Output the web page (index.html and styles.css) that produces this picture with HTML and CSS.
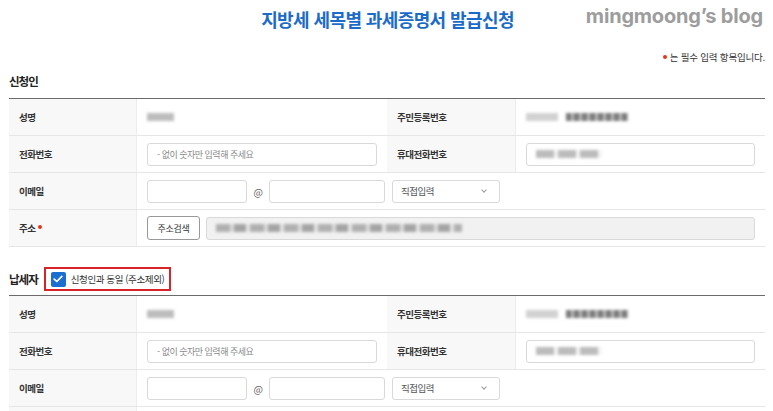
FILE: index.html
```html
<!DOCTYPE html>
<html lang="ko">
<head>
    <meta charset="utf-8">
    <title>지방세 세목별 과세증명서 발급신청</title>
    <link rel="stylesheet" href="styles.css">
</head>
<body>
<div class="page">
    <div class="page-head">
        <h1 class="page-title">지방세 세목별 과세증명서 발급신청</h1>
        <span class="blog-mark">mingmoong’s blog</span>
    </div>
    <p class="required-note"><span class="req-dot"></span>는 필수 입력 항목입니다.</p>

    <!-- 신청인 -->
    <h2 class="section-title">신청인</h2>
    <div class="form-table">
        <div class="th">성명</div>
        <div class="td"><span class="blur blur-name"></span></div>
        <div class="th">주민등록번호</div>
        <div class="td"><span class="blur blur-id-a"></span><span class="blur blur-id-b"></span></div>

        <div class="th">전화번호</div>
        <div class="td"><input class="input input-full" type="text" placeholder="- 없이 숫자만 입력해 주세요"></div>
        <div class="th">휴대전화번호</div>
        <div class="td"><div class="input input-full input-fake"><span class="blur blur-phone"></span></div></div>

        <div class="th">이메일</div>
        <div class="td td-wide">
            <input class="input input-mail-id" type="text">
            <span class="at">@</span>
            <input class="input input-mail-domain" type="text">
            <div class="select">직접입력<span class="caret"></span></div>
        </div>

        <div class="th">주소<span class="req-dot"></span></div>
        <div class="td td-wide">
            <button class="btn" type="button">주소검색</button>
            <div class="input input-addr"><span class="blur blur-addr"></span></div>
        </div>
    </div>

    <!-- 납세자 -->
    <div class="section-head">
        <h2 class="section-title inline">납세자</h2>
        <label class="same-check">
            <span class="check-box"><svg width="10" height="8" viewBox="0 0 10 8"><path d="M1.2 4.1 3.8 6.5 8.8 1.4" fill="none" stroke="#fff" stroke-width="1.7" stroke-linecap="round" stroke-linejoin="round"/></svg></span>
            신청인과 동일 (주소제외)
        </label>
    </div>
    <div class="form-table">
        <div class="th">성명</div>
        <div class="td"><span class="blur blur-name"></span></div>
        <div class="th">주민등록번호</div>
        <div class="td"><span class="blur blur-id-a"></span><span class="blur blur-id-b"></span></div>

        <div class="th">전화번호</div>
        <div class="td"><input class="input input-full" type="text" placeholder="- 없이 숫자만 입력해 주세요"></div>
        <div class="th">휴대전화번호</div>
        <div class="td"><div class="input input-full input-fake"><span class="blur blur-phone"></span></div></div>

        <div class="th">이메일</div>
        <div class="td td-wide">
            <input class="input input-mail-id" type="text">
            <span class="at">@</span>
            <input class="input input-mail-domain" type="text">
            <div class="select">직접입력<span class="caret"></span></div>
        </div>

        <div class="th"></div>
        <div class="td td-wide"></div>
    </div>
</div>
</body>
</html>
```

FILE: styles.css
```css
* {
    margin: 0;
    padding: 0;
    box-sizing: border-box;
}

body {
    background: #fff;
    color: #333;
    font-family: "Noto Sans CJK KR", "Noto Sans", sans-serif;
    overflow: hidden;
}

.page {
    width: 773px;
    height: 411px;
    overflow: hidden;
    padding: 0 8px 0 9px;
}

.page-head {
    position: relative;
    height: 38px;
    display: flex;
    justify-content: center;
    align-items: center;
}

.page-title {
    font-size: 18px;
    font-weight: 700;
    color: #1b6bc9;
    letter-spacing: -0.6px;
    margin-left: 1px;
}

.blog-mark {
    position: absolute;
    right: 2px;
    top: 4px;
    font-family: Inter, sans-serif;
    font-size: 20px;
    font-weight: 700;
    color: #9d9d9d;
    letter-spacing: -0.2px;
}

.required-note {
    text-align: right;
    font-size: 9.5px;
    letter-spacing: -0.2px;
    color: #333;
    line-height: 14px;
    margin-top: 12px;
}

.req-dot {
    display: inline-block;
    width: 4px;
    height: 4px;
    border-radius: 50%;
    background: #e0381a;
    margin: 0 3px 2px 3px;
    vertical-align: middle;
}

.required-note .req-dot {
    margin-left: 0;
}

.section-title {
    font-size: 11.5px;
    font-weight: 700;
    letter-spacing: -1px;
    color: #222;
    line-height: 18px;
    margin: 8px 0 8px;
}

.section-title.inline {
    margin: 0;
}

.form-table {
    display: grid;
    grid-template-columns: 128px 250px 129px 249px;
    grid-auto-rows: 37px;
    border-top: 1px solid #6b6b6b;
}

.th,
.td {
    display: flex;
    align-items: center;
    border-bottom: 1px solid #e6e6e6;
    font-size: 9.5px;
    letter-spacing: -0.5px;
}

.th {
    background: #f8f8f8;
    font-weight: 700;
    color: #333;
    padding-left: 10px;
    border-right: 1px solid #ececec;
}

.td {
    padding: 0 10px;
}

.td-wide {
    grid-column: span 3;
}

.input {
    height: 23px;
    border: 1px solid #d9d9d9;
    border-radius: 3px;
    background: #fff;
    font-family: inherit;
    font-size: 9px;
    letter-spacing: -0.5px;
    padding: 0 9px;
    color: #333;
    outline: none;
}

.input::placeholder {
    color: #8a8a8a;
}

.input-full {
    width: 230px;
}

.input-fake {
    display: flex;
    align-items: center;
}

.input-mail-id {
    width: 100px;
}

.at {
    width: 22px;
    text-align: center;
    color: #666;
    font-size: 10px;
}

.input-mail-domain {
    width: 116px;
}

.select {
    width: 108px;
    height: 23px;
    margin-left: 7px;
    border: 1px solid #d9d9d9;
    border-radius: 3px;
    display: flex;
    align-items: center;
    justify-content: space-between;
    padding: 0 13px 0 8px;
    font-size: 9.5px;
    color: #555;
}

.caret {
    width: 4px;
    height: 4px;
    border-right: 1px solid #999;
    border-bottom: 1px solid #999;
    transform: rotate(45deg);
    margin-bottom: 2px;
}

.btn {
    height: 24px;
    width: 53px;
    border: 1px solid #999;
    border-radius: 3px;
    background: #fff;
    font-family: inherit;
    font-size: 9px;
    letter-spacing: -0.3px;
    color: #333;
    margin-right: 6px;
}

.input-addr {
    width: 549px;
    background: #f1f1f1;
    display: flex;
    align-items: center;
}

.blur {
    display: inline-block;
    height: 8px;
    background: #aaa;
    filter: blur(1.8px);
}

.blur-name {
    width: 27px;
    background: #bdbdbd;
}

.blur-id-a {
    width: 32px;
    background: #d2d2d2;
    margin-right: 8px;
}

.blur-id-b {
    width: 62px;
    background: repeating-linear-gradient(90deg, #7a7a7a 0 5px, #b8b8b8 5px 8px);
}

.blur-phone {
    width: 66px;
    background: repeating-linear-gradient(90deg, #bcbcbc 0 18px, #f4f4f4 18px 22px);
}

.blur-addr {
    width: 246px;
    background: repeating-linear-gradient(90deg, #b0b0b0 0 14px, #dadada 14px 18px, #a4a4a4 18px 30px, #e4e4e4 30px 34px);
}

.section-head {
    display: flex;
    align-items: center;
    margin: 20px 0 4px;
}

.same-check {
    display: flex;
    align-items: center;
    height: 24px;
    margin-left: 6px;
    padding: 0 5px 0 5px;
    border: 2px solid #d9232b;
    font-size: 9.5px;
    letter-spacing: -0.4px;
    color: #333;
}

.check-box {
    width: 15px;
    height: 15px;
    border-radius: 2px;
    background: #1a6fd0;
    display: inline-flex;
    align-items: center;
    justify-content: center;
    margin-right: 5px;
}
```
